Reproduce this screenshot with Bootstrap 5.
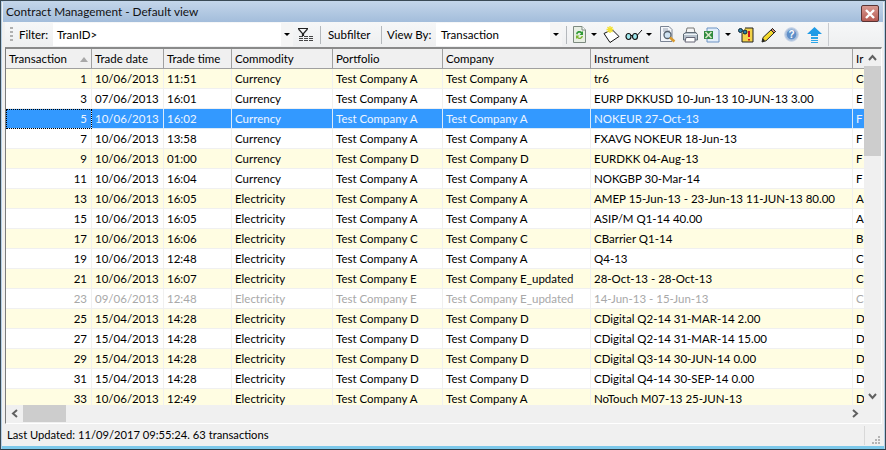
<!doctype html>
<html lang="en">
<head>
<meta charset="utf-8">
<title>Contract Management</title>
<link href="https://cdn.jsdelivr.net/npm/bootstrap@5.3.0/dist/css/bootstrap.min.css" rel="stylesheet">
<style>
html,body{margin:0;background:#f0f0f0;overflow:hidden}
body{font:11.5px/16px Lato,"Liberation Sans",sans-serif;color:#000}
.winframe{width:886px;height:450px;background:#f0f0f0;border:1px solid #3a4a55;border-bottom-color:#2b3a44;display:flex;flex-direction:column;box-shadow:inset 0 0 0 1px #b6d0e6}
.wintitle{height:21px;margin:0 2px;padding:3px 3px 0 3px;flex:none;background:linear-gradient(#c4d6ea,#a3bddb);display:flex;justify-content:space-between;font-size:11.8px;color:#111}
.closebtn{width:18px;height:17px;margin:1px 1px 0 0;border:1px solid #5a3434;border-radius:2px;background:linear-gradient(#d99a92,#b55a52);display:flex;align-items:center;justify-content:center}
.toolstrip{height:25px;flex:none;margin:0 3px 0 4px;display:flex;align-items:center;background:linear-gradient(#f6f7f8,#eeeff0)}
.gripdots{width:3px;height:15px;margin:0 6px 0 5px;background:repeating-linear-gradient(#b0b0b0 0 2px,transparent 2px 4px)}
.labelfilter{width:34px;flex:none}
.labelsub{width:44px;flex:none}
.labelview{width:49px;flex:none}
.combobox{height:23px;background:#fff;display:flex;align-items:center;justify-content:space-between;padding:0 0 0 4px;flex:none}
.combofilter{width:240px}
.comboview{width:126px;padding-left:5px}
.droparrow{width:0;height:0;border:3px solid transparent;border-top:3px solid #000;border-bottom:0;flex:none}
.comboarrowwrap{width:12px;height:23px;background:#f5f5f5;display:flex;align-items:center;justify-content:center}
.vsep{width:1px;height:18px;background:#b4b8bc;flex:none}
.toolicon{flex:none;display:block}
.toolend{width:1px;height:23px;background:#c8cbd0}
.gridframe{flex:1 1 auto;min-height:0;margin:0 3px 0 4px;display:flex;flex-direction:column;border-top:2px solid #8a8a8a;border-left:1px solid #7c7c7c;border-right:1px solid #fff;border-bottom:1px solid #fff}
.gridbody{flex:1 1 auto;min-height:0;display:flex}
.gridview{flex:1 1 auto;overflow:hidden;min-width:0;background:#fff}
.datagrid{table-layout:fixed;border-collapse:separate;border-spacing:0;width:905px;margin:0;color:#000}
.datagrid th,.datagrid td{padding:0 3px;height:20px;border:0;border-right:1px solid #f0f0f0;border-bottom:1px solid #f0f0f0;white-space:nowrap;overflow:hidden;font-weight:400;vertical-align:middle;background:transparent;color:inherit;box-shadow:none}
.datagrid th{background:#f0f0f0;border-right:1px solid #a0a0a0;border-bottom:1px solid #a0a0a0}
.datagrid .rowalt td{background:#fffde2}
.datagrid .rowsel td{background:#3399ff;color:#eef5ff;border-right-color:#dbeaf8;border-bottom-color:#dbeaf8}
.datagrid .rowsel td:first-child{outline:1px dotted #000;outline-offset:-1px}
.datagrid .rowoff td{color:#a8a8a8}
.datagrid .numcell{text-align:right;padding-right:4px}
.sortmark{float:right;width:0;height:0;margin:6px 0 0 0;border:4.5px solid transparent;border-top:0;border-bottom:5px solid #a8a8a8}
.vscroller{width:17px;flex:none;background:#f0f0f0;display:flex;flex-direction:column}
.scrollbtn{width:17px;height:17px;flex:none;display:flex;align-items:center;justify-content:center}
.vthumb{height:90px;background:#cdcdcd;flex:none}
.hscroller{height:18px;flex:none;background:#f0f0f0;display:flex;align-items:flex-start}
.hthumb{width:43px;height:17px;background:#cdcdcd;flex:none}
.statusline{height:22px;flex:none;margin:0 3px 0 4px;padding-left:2px;display:flex;align-items:center;justify-content:space-between;font-size:11.2px}
.statusend{height:19px;width:18px;border-left:1px solid #d8d8d8;display:flex;align-items:flex-end;justify-content:flex-end;padding:0 2px 1px 0}
.winbottom{height:3px;flex:none;background:#7cc8ea;margin:0 1px}
.ms3px{margin-left:3px}.ms4px{margin-left:4px}.ms5px{margin-left:5px}.ms6px{margin-left:6px}.ms7px{margin-left:7px}.ms8px{margin-left:8px}.ms9px{margin-left:9px}
</style>
</head>
<body>
<div class="winframe">
  <div class="wintitle">
    <span>Contract Management - Default view</span>
    <div class="closebtn"><svg width="12" height="10" viewBox="0 0 12 10"><path d="M2 1 L10 9 M10 1 L2 9" stroke="#fff" stroke-width="2.4"/></svg></div>
  </div>
  <div class="toolstrip">
    <div class="gripdots"></div>
    <span class="labelfilter">Filter:</span>
    <div class="combobox combofilter"><span>TranID&gt;</span><span class="comboarrowwrap"><span class="droparrow"></span></span></div>
    <svg class="toolicon ms4px" width="17" height="15" viewBox="0 0 17 15"><path d="M1 1.500H11M1.500 2 5.500 6.500V9M10.500 2 6.500 6.500V9" fill="none" stroke="#222" stroke-width="1.200"/><path d="M2 9.500h4M7 9.500h4M12 9.500h4M2 11.500h4M7 11.500h4M12 11.500h4M2 13.500h4M7 13.500h4M12 13.500h4" stroke="#444"/></svg>
    <div class="vsep ms6px"></div>
    <span class="labelsub ms7px">Subfilter</span>
    <div class="vsep ms9px"></div>
    <span class="labelview ms5px">View By:</span>
    <div class="combobox comboview"><span>Transaction</span><span class="comboarrowwrap"><span class="droparrow"></span></span></div>
    <div class="vsep ms4px"></div>
    <svg class="toolicon ms5px" width="15" height="17" viewBox="0 0 15 17"><path d="M1.500.5H10L13.500 4V16.500H1.500Z" fill="#e8efe4" stroke="#7d8a80"/><path d="M10 .5V4H13.500" fill="#fff" stroke="#7d8a80"/><path d="M4 8a3.500 3.500 0 0 1 6-2L11 5V9H7.500L9 7.500A2 2 0 0 0 5.500 8.500Z" fill="#2f9a35"/><path d="M11 10a3.500 3.500 0 0 1-6 2L4 13V9.500H7.500L6 11A2 2 0 0 0 9.500 10Z" fill="#79b52f"/></svg>
    <span class="droparrow ms4px"></span>
    <svg class="toolicon ms6px" width="17" height="17" viewBox="0 0 17 17"><path d="M1 7.500 9 3.500 16 10.500 7 16.500Z" fill="#fff" stroke="#111"/><path d="M7 0V7M3.500 3.500H10.500M4.500 1 9.500 6M9.500 1 4.500 6" stroke="#f2e02e" stroke-width="1.300"/></svg>
    <svg class="toolicon ms5px" width="18" height="13" viewBox="0 0 18 13"><ellipse cx="3.500" cy="8.500" rx="2.500" ry="3" fill="#9fe8ee" stroke="#111" stroke-width="1.200"/><ellipse cx="10" cy="8.500" rx="2.500" ry="3" fill="#9fe8ee" stroke="#111" stroke-width="1.200"/><path d="M6 7.500H7.500M12.500 7 17 2" fill="none" stroke="#111"/></svg>
    <span class="droparrow ms3px"></span>
    <svg class="toolicon ms8px" width="16" height="17" viewBox="0 0 16 17"><path d="M.5.5H9L12 3.500V15.500H.5Z" fill="#f4f6fa" stroke="#7b8494"/><path d="M3 3h5M3 5h7" stroke="#9aa4b4"/><circle cx="7.500" cy="9" r="3.500" fill="#cfe2f2" stroke="#56606c" stroke-width="1.300"/><path d="M10 11.500 14.500 15.500" stroke="#d99a2e" stroke-width="2.400"/></svg>
    <svg class="toolicon ms6px" width="16" height="16" viewBox="0 0 16 16"><path d="M5 1H12L13 6H4Z" fill="#f5f5f5" stroke="#777"/><path d="M1.500 7 4 5.500H14L15.500 8V13H1.500Z" fill="#b7c2cc" stroke="#5f6b76"/><path d="M4 10.500H13V15H3Z" fill="#fff" stroke="#667"/><path d="M2 7.500H15" stroke="#eef3f7"/></svg>
    <svg class="toolicon ms6px" width="16" height="16" viewBox="0 0 16 16"><path d="M3 1H13L15 3V15H3Z" fill="#e3eefa" stroke="#6d93c4"/><path d="M0 4H9V12H0Z" fill="#2f8b3f"/><path d="M1.500 5 7.500 11M7.500 5 1.500 11" stroke="#d9e8c8" stroke-width="1.600"/></svg>
    <span class="droparrow ms5px"></span>
    <svg class="toolicon ms7px" width="16" height="16" viewBox="0 0 16 16"><path d="M7 1H15V15H4V6" fill="#f3d34a" stroke="#222"/><path d="M11 4V10M11 12V13.500" stroke="#d3141c" stroke-width="2"/><circle cx="2.500" cy="3.500" r="2" fill="#2a84a8" stroke="#123"/><circle cx="7" cy="5" r="2" fill="#2a84a8" stroke="#123"/></svg>
    <svg class="toolicon ms7px" width="16" height="16" viewBox="0 0 16 16"><path d="M1 15 2 10.500 11.500 1.500 14.500 4.500 5 13.800Z" fill="#f3d92c" stroke="#222"/><path d="M11.500 1.500 14.500 4.500 13 6 10 3Z" fill="#d98a6a" stroke="#222"/><path d="M1 15 2 11.500 4 13.500Z" fill="#222"/></svg>
    <svg class="toolicon ms7px" width="15" height="15" viewBox="0 0 15 15"><circle cx="7.500" cy="7.500" r="6.800" fill="#a8bfdc" stroke="#c4d2e6"/><circle cx="7.500" cy="7.500" r="4.800" fill="#5f8fc8"/><text x="7.500" y="11" text-anchor="middle" font-size="10" font-weight="700" font-family="Liberation Sans" fill="#fff">?</text></svg>
    <svg class="toolicon ms8px" width="15" height="16" viewBox="0 0 15 16"><path d="M7.500 0 15 7H11V9H4V7H0Z" fill="#1f9be6"/><path d="M4 10H11V12H4ZM4 13H11V14H4ZM4 15H11V16H4Z" fill="#2ca6e8"/></svg>
    <div class="toolend ms6px"></div>
  </div>
  <div class="gridframe">
    <div class="gridbody">
      <div class="gridview">
        <table class="table datagrid">
          <colgroup><col style="width:86px"><col style="width:72px"><col style="width:68px"><col style="width:101px"><col style="width:110px"><col style="width:148px"><col style="width:262px"><col style="width:58px"></colgroup>
          <thead><tr><th><span class="sortmark"></span>Transaction</th><th>Trade date</th><th>Trade time</th><th>Commodity</th><th>Portfolio</th><th>Company</th><th>Instrument</th><th>Ir</th></tr></thead>
          <tbody>
            <tr class="rowalt"><td class="numcell">1</td><td>10/06/2013</td><td>11:51</td><td>Currency</td><td>Test Company A</td><td>Test Company A</td><td>tr6</td><td>C</td></tr>
            <tr><td class="numcell">3</td><td>07/06/2013</td><td>16:01</td><td>Currency</td><td>Test Company A</td><td>Test Company A</td><td>EURP DKKUSD 10-Jun-13 10-JUN-13 3.00</td><td>E</td></tr>
            <tr class="rowsel"><td class="numcell">5</td><td>10/06/2013</td><td>16:02</td><td>Currency</td><td>Test Company A</td><td>Test Company A</td><td>NOKEUR 27-Oct-13</td><td>F</td></tr>
            <tr><td class="numcell">7</td><td>10/06/2013</td><td>13:58</td><td>Currency</td><td>Test Company A</td><td>Test Company A</td><td>FXAVG NOKEUR 18-Jun-13</td><td>F</td></tr>
            <tr class="rowalt"><td class="numcell">9</td><td>10/06/2013</td><td>01:00</td><td>Currency</td><td>Test Company D</td><td>Test Company D</td><td>EURDKK 04-Aug-13</td><td>F</td></tr>
            <tr><td class="numcell">11</td><td>10/06/2013</td><td>16:04</td><td>Currency</td><td>Test Company A</td><td>Test Company A</td><td>NOKGBP 30-Mar-14</td><td>F</td></tr>
            <tr class="rowalt"><td class="numcell">13</td><td>10/06/2013</td><td>16:05</td><td>Electricity</td><td>Test Company A</td><td>Test Company A</td><td>AMEP 15-Jun-13 - 23-Jun-13 11-JUN-13 80.00</td><td>A</td></tr>
            <tr><td class="numcell">15</td><td>10/06/2013</td><td>16:05</td><td>Electricity</td><td>Test Company A</td><td>Test Company A</td><td>ASIP/M Q1-14 40.00</td><td>A</td></tr>
            <tr class="rowalt"><td class="numcell">17</td><td>10/06/2013</td><td>16:06</td><td>Electricity</td><td>Test Company C</td><td>Test Company C</td><td>CBarrier Q1-14</td><td>B</td></tr>
            <tr><td class="numcell">19</td><td>10/06/2013</td><td>12:48</td><td>Electricity</td><td>Test Company A</td><td>Test Company A</td><td>Q4-13</td><td>C</td></tr>
            <tr class="rowalt"><td class="numcell">21</td><td>10/06/2013</td><td>16:07</td><td>Electricity</td><td>Test Company E</td><td>Test Company E_updated</td><td>28-Oct-13 - 28-Oct-13</td><td>C</td></tr>
            <tr class="rowoff"><td class="numcell">23</td><td>09/06/2013</td><td>12:48</td><td>Electricity</td><td>Test Company E</td><td>Test Company E_updated</td><td>14-Jun-13 - 15-Jun-13</td><td>C</td></tr>
            <tr class="rowalt"><td class="numcell">25</td><td>15/04/2013</td><td>14:28</td><td>Electricity</td><td>Test Company D</td><td>Test Company D</td><td>CDigital Q2-14 31-MAR-14 2.00</td><td>D</td></tr>
            <tr><td class="numcell">27</td><td>15/04/2013</td><td>14:28</td><td>Electricity</td><td>Test Company D</td><td>Test Company D</td><td>CDigital Q2-14 31-MAR-14 15.00</td><td>D</td></tr>
            <tr class="rowalt"><td class="numcell">29</td><td>15/04/2013</td><td>14:28</td><td>Electricity</td><td>Test Company D</td><td>Test Company D</td><td>CDigital Q3-14 30-JUN-14 0.00</td><td>D</td></tr>
            <tr><td class="numcell">31</td><td>15/04/2013</td><td>14:28</td><td>Electricity</td><td>Test Company D</td><td>Test Company D</td><td>CDigital Q4-14 30-SEP-14 0.00</td><td>D</td></tr>
            <tr class="rowalt"><td class="numcell">33</td><td>10/06/2013</td><td>12:49</td><td>Electricity</td><td>Test Company A</td><td>Test Company A</td><td>NoTouch M07-13 25-JUN-13</td><td>D</td></tr>
          </tbody>
        </table>
      </div>
      <div class="vscroller">
        <div class="scrollbtn"><svg width="9" height="7" viewBox="0 0 9 7"><path d="M1 6 4.500 2 8 6" fill="none" stroke="#606060" stroke-width="2"/></svg></div>
        <div class="vthumb"></div>
        <div class="flex-grow-1"></div>
        <div class="scrollbtn"><svg width="9" height="7" viewBox="0 0 9 7"><path d="M1 1 4.500 5 8 1" fill="none" stroke="#606060" stroke-width="2"/></svg></div>
      </div>
    </div>
    <div class="hscroller">
      <div class="scrollbtn"><svg width="7" height="9" viewBox="0 0 7 9"><path d="M6 1 2 4.500 6 8" fill="none" stroke="#606060" stroke-width="2"/></svg></div>
      <div class="hthumb"></div>
      <div class="flex-grow-1"></div>
      <div class="scrollbtn"><svg width="7" height="9" viewBox="0 0 7 9"><path d="M1 1 5 4.500 1 8" fill="none" stroke="#606060" stroke-width="2"/></svg></div>
      <div class="scrollbtn"></div>
    </div>
  </div>
  <div class="statusline">
    <span>Last Updated: 11/09/2017 09:55:24. 63 transactions</span>
    <div class="statusend"><svg width="8" height="8" viewBox="0 0 8 8"><path d="M6 0h2v2H6zM3 3h2v2H3zM6 3h2v2H6zM0 6h2v2H0zM3 6h2v2H3zM6 6h2v2H6z" fill="#b4b4b4"/></svg></div>
  </div>
  <div class="winbottom"></div>
</div>
<script src="https://cdn.jsdelivr.net/npm/bootstrap@5.3.0/dist/js/bootstrap.bundle.min.js"></script>
</body>
</html>
